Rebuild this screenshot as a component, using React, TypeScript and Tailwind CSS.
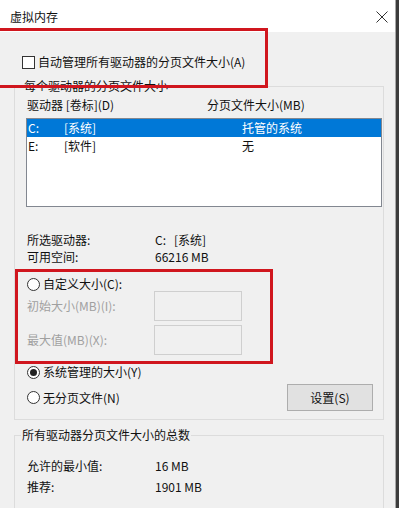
import React from "react";

const font = { fontFamily: '"Noto Sans CJK SC", "Noto Sans", sans-serif' };

function Radio({ checked = false }: { checked?: boolean }) {
  return (
    <span className="flex h-[13px] w-[13px] shrink-0 items-center justify-center rounded-full border border-[#333] bg-white">
      {checked ? <span className="h-[7px] w-[7px] rounded-full bg-[#222]" /> : null}
    </span>
  );
}

function InfoRow({ label, value, className = "" }: { label: string; value: string; className?: string }) {
  return (
    <div className={`flex h-[16px] items-center pl-[12px] ${className}`}>
      <span className="w-[128px]">{label}</span>
      <span className="whitespace-pre">{value}</span>
    </div>
  );
}

export default function App() {
  return (
    <div
      className="relative flex h-[508px] w-[405px] overflow-hidden bg-white text-[12px] leading-[16px] text-[#111]"
      style={font}
    >
      <div className="flex w-[395px] flex-col">
        {/* title bar */}
        <div className="flex h-[32px] shrink-0 items-center bg-white pl-[10px] pr-[7px]">
          <span className="pt-[2px]">虚拟内存</span>
          <svg className="ml-auto mt-[2px]" width="12" height="12" viewBox="0 0 12 12">
            <path d="M0.5 0.5 L11.5 11.5 M11.5 0.5 L0.5 11.5" stroke="#333" strokeWidth="1" fill="none" />
          </svg>
        </div>

        <div className="flex-1 bg-[#f0f0f0]">
          <div className="mt-[22px] flex h-[16px] items-center pl-[22px]">
            <span className="h-[13px] w-[13px] border border-[#333] bg-white" />
            <span className="ml-[3px]">自动管理所有驱动器的分页文件大小(A)</span>
          </div>

          <fieldset className="ml-[14px] mt-[8px] w-[370px] border border-[#dcdcdc] pb-[8px]">
            <legend className="ml-[8px] px-[1px] leading-[16px]">每个驱动器的分页文件大小</legend>

            <div className="mt-[3px] flex h-[16px] items-center pl-[12px]">
              <span className="w-[180px]">驱动器 [卷标](D)</span>
              <span>分页文件大小(MB)</span>
            </div>

            <div className="ml-[11px] mt-[5px] h-[89px] w-[356px] border border-[#828790] bg-white">
              <div className="flex h-[18px] items-center bg-[#0078d7] pl-[1px] text-white">
                <span className="w-[36px]">C:</span>
                <span className="w-[178px]">[系统]</span>
                <span>托管的系统</span>
              </div>
              <div className="flex h-[18px] items-center pl-[1px]">
                <span className="w-[36px]">E:</span>
                <span className="w-[178px]">[软件]</span>
                <span>无</span>
              </div>
            </div>

            <InfoRow label="所选驱动器:" value="C:   [系统]" className="mt-[25px]" />
            <InfoRow label="可用空间:" value="66216 MB" className="mt-[1px]" />

            <div className="mt-[12px] flex h-[14px] items-center pl-[12px]">
              <Radio />
              <span className="ml-[3px]">自定义大小(C):</span>
            </div>

            <div className="flex h-[30px] items-center pl-[12px] text-[#a0a0a0]">
              <span className="w-[127px]">初始大小(MB)(I):</span>
              <span className="h-[30px] w-[88px] border border-[#cfcfcf] bg-[#f0f0f0]" />
            </div>
            <div className="mt-[4px] flex h-[30px] items-center pl-[12px] text-[#a0a0a0]">
              <span className="w-[127px]">最大值(MB)(X):</span>
              <span className="h-[30px] w-[88px] border border-[#cfcfcf] bg-[#f0f0f0]" />
            </div>

            <div className="mt-[10px] flex h-[14px] items-center pl-[12px]">
              <Radio checked />
              <span className="ml-[3px]">系统管理的大小(Y)</span>
            </div>

            <div className="mt-[5px] flex h-[27px] items-center pl-[12px] pr-[10px]">
              <Radio />
              <span className="ml-[3px]">无分页文件(N)</span>
              <button
                type="button"
                className="ml-auto flex h-[27px] w-[86px] items-center justify-center border border-[#adadad] bg-[#e1e1e1]"
              >
                设置(S)
              </button>
            </div>
          </fieldset>

          <fieldset className="ml-[14px] mt-[7px] w-[370px] border border-[#dcdcdc] pb-[20px]">
            <legend className="ml-[6px] px-[1px] leading-[16px]">所有驱动器分页文件大小的总数</legend>
            <InfoRow label="允许的最小值:" value="16 MB" className="mt-[15px]" />
            <InfoRow label="推荐:" value="1901 MB" className="mt-[5px]" />
          </fieldset>
        </div>
      </div>

      <div className="w-px bg-[#a8a8a8]" />
      <div className="w-[3px] bg-[#3c3c3c]" />
      <div className="flex-1 bg-white" />

      {/* annotation boxes */}
      <div className="absolute left-[-3px] top-[28px] h-[60px] w-[271px] border-[3px] border-[#d0161e]" />
      <div className="absolute left-[15px] top-[269px] h-[95px] w-[258px] border-[3px] border-[#d0161e]" />
    </div>
  );
}
